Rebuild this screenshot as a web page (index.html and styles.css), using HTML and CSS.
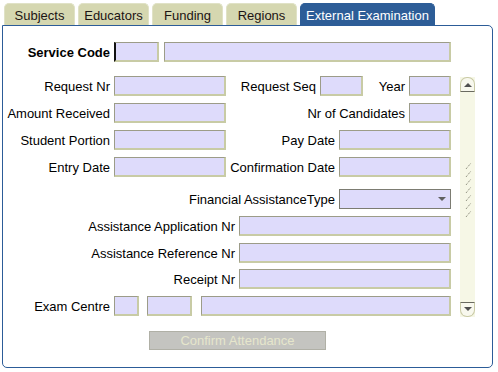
FILE: index.html
```html
<!DOCTYPE html>
<html lang="en">
<head>
    <meta charset="UTF-8">
    <title>External Examination</title>
    <link rel="stylesheet" href="styles.css">
</head>
<body>
    <div class="tabs">
        <div class="tab">Subjects</div>
        <div class="tab">Educators</div>
        <div class="tab">Funding</div>
        <div class="tab">Regions</div>
        <div class="tab active">External Examination</div>
    </div>
    <div class="panel">
        <div class="row">
            <label class="lbl w111 bold">Service Code</label>
            <input class="fld caret w45" type="text">
            <input class="fld w287 ml5" type="text">
        </div>
        <div class="body">
            <div class="fields">
                <div class="row">
                    <label class="lbl w111">Request Nr</label>
                    <input class="fld w112" type="text">
                    <label class="lbl w94">Request Seq</label>
                    <input class="fld w43" type="text">
                    <label class="lbl w46">Year</label>
                    <input class="fld w42" type="text">
                </div>
                <div class="row mt7">
                    <label class="lbl w111">Amount Received</label>
                    <input class="fld w112" type="text">
                    <label class="lbl w183">Nr of Candidates</label>
                    <input class="fld w42" type="text">
                </div>
                <div class="row mt7">
                    <label class="lbl w111">Student Portion</label>
                    <input class="fld w112" type="text">
                    <label class="lbl w113">Pay Date</label>
                    <input class="fld w112" type="text">
                </div>
                <div class="row mt7">
                    <label class="lbl w111">Entry Date</label>
                    <input class="fld w112" type="text">
                    <label class="lbl w113">Confirmation Date</label>
                    <input class="fld w112" type="text">
                </div>
                <div class="row mt12">
                    <label class="lbl w336">Financial AssistanceType</label>
                    <div class="sel w112"><span class="arrow"></span></div>
                </div>
                <div class="row mt7">
                    <label class="lbl w236">Assistance Application Nr</label>
                    <input class="fld w212" type="text">
                </div>
                <div class="row mt7">
                    <label class="lbl w236">Assistance Reference Nr</label>
                    <input class="fld w212" type="text">
                </div>
                <div class="row mt6">
                    <label class="lbl w236">Receipt Nr</label>
                    <input class="fld w212" type="text">
                </div>
                <div class="row mt7">
                    <label class="lbl w111">Exam Centre</label>
                    <input class="fld w25" type="text">
                    <input class="fld w45 ml8" type="text">
                    <input class="fld w250 ml9" type="text">
                </div>
            </div>
            <div class="scroll">
                <div class="sbtn up"><span class="tri"></span></div>
                <svg class="grip" width="15" height="58" viewBox="0 0 15 58">
                    <g stroke="#7a7a6a" stroke-width="1" stroke-dasharray="1 1" fill="none">
                        <line x1="6" y1="7" x2="11" y2="1"/>
                        <line x1="6" y1="15" x2="11" y2="9"/>
                        <line x1="6" y1="23" x2="11" y2="17"/>
                        <line x1="6" y1="31" x2="11" y2="25"/>
                        <line x1="6" y1="39" x2="11" y2="33"/>
                        <line x1="6" y1="47" x2="11" y2="41"/>
                        <line x1="6" y1="55" x2="11" y2="49"/>
                    </g>
                </svg>
                <div class="sbtn down"><span class="tri"></span></div>
            </div>
        </div>
        <div class="actions">
            <button class="btn" disabled>Confirm Attendance</button>
        </div>
    </div>
</body>
</html>
```

FILE: styles.css
```css
*{
    margin: 0;
    padding: 0;
    box-sizing: border-box;
}
body{
    background-color: #fff;
    font-family: "Liberation Sans", Arial, sans-serif;
    font-size: 13px;
    color: #000;
}
.tabs{
    display: flex;
    gap: 3px;
    margin-top: 3px;
    padding-left: 4px;
    height: 22px;
}
.tab{
    width: 71px;
    height: 22px;
    padding-top: 3px;
    line-height: 17px;
    text-align: center;
    background-color: #d5d7b0;
    color: #1c1414;
    border-radius: 5px 5px 0 0;
    border: 1px solid #e0e2c6;
    border-bottom: none;
}
.tab.active{
    width: 135px;
    background-color: #2d5d97;
    border-color: #2d5d97;
    color: #fff;
}
.panel{
    margin-left: 2px;
    width: 491px;
    height: 343px;
    border: 1px solid #2c5c98;
    border-radius: 0 5px 5px 5px;
    padding-top: 16px;
}
.row{
    display: flex;
    align-items: center;
    height: 20px;
}
.lbl{
    flex-shrink: 0;
    padding-right: 4px;
    text-align: right;
    white-space: nowrap;
}
.bold{
    font-weight: bold;
}
.fld{
    flex-shrink: 0;
    height: 20px;
    background-color: #dedbfb;
    border-style: solid;
    border-width: 1px 2px 2px 1px;
    border-color: #9c9c88 #c8cba5 #c8cba5 #9c9c88;
    font: inherit;
    outline: none;
}
.caret{
    border-left: 2px solid #111;
}
.sel{
    position: relative;
    flex-shrink: 0;
    height: 20px;
    background-color: #dedbfb;
    border: 1px solid #7c7c72;
}
.arrow{
    position: absolute;
    right: 4px;
    top: 7px;
    border-left: 4px solid transparent;
    border-right: 4px solid transparent;
    border-top: 4px solid #606060;
}
.body{
    display: flex;
    margin-top: 14px;
}
.fields{
    width: 451px;
}
.scroll{
    margin-left: 6px;
    margin-top: 1px;
    width: 15px;
    height: 240px;
    background-color: #f6f7e6;
    display: flex;
    flex-direction: column;
}
.sbtn{
    position: relative;
    width: 15px;
    height: 15px;
    background-color: #f8f8ee;
    border: 1px solid #c9caa6;
}
.sbtn.up{
    border-radius: 7px 7px 0 0;
    border-bottom: 1px solid #6a6a60;
}
.sbtn.down{
    margin-top: auto;
    border-radius: 0 0 7px 7px;
    border-top: 1px solid #6a6a60;
}
.tri{
    position: absolute;
    left: 3px;
    border-left: 4px solid transparent;
    border-right: 4px solid transparent;
}
.up .tri{
    top: 5px;
    border-bottom: 4px solid #505050;
}
.down .tri{
    top: 4px;
    border-top: 4px solid #505050;
}
.grip{
    display: block;
    margin-top: 70px;
}
.actions{
    margin-top: 14px;
    padding-left: 146px;
}
.btn{
    width: 177px;
    height: 19px;
    background-color: #c4c4c0;
    border: 1px solid #b0b0a6;
    color: #e6e6cc;
    font: inherit;
}
.mt6{ margin-top: 6px; }
.mt7{ margin-top: 7px; }
.mt12{ margin-top: 12px; }
.ml5{ margin-left: 5px; }
.ml8{ margin-left: 8px; }
.ml9{ margin-left: 9px; }
.w25{ width: 25px; }
.w42{ width: 42px; }
.w43{ width: 43px; }
.w45{ width: 45px; }
.w46{ width: 46px; }
.w94{ width: 94px; }
.w111{ width: 111px; }
.w112{ width: 112px; }
.w113{ width: 113px; }
.w183{ width: 183px; }
.w212{ width: 212px; }
.w236{ width: 236px; }
.w250{ width: 250px; }
.w287{ width: 287px; }
.w336{ width: 336px; }
```
